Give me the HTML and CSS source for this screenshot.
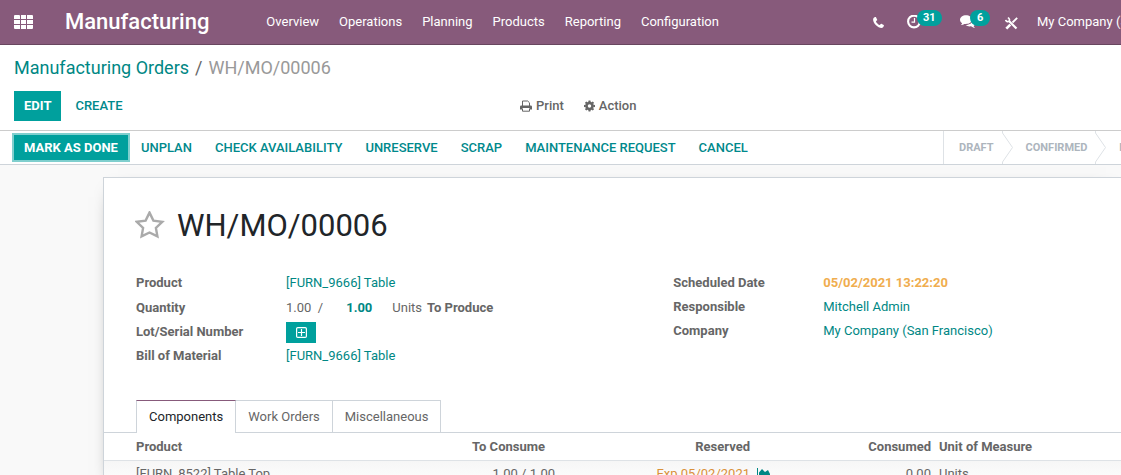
FILE: index.html
```html
<!DOCTYPE html>
<html lang="en">
<head>
<meta charset="utf-8">
<title>WH/MO/00006 - Manufacturing</title>
<link rel="stylesheet" href="styles.css">
</head>
<body>
<header class="navbar">
  <button class="apps" aria-label="Applications">
    <svg width="19" height="15" viewBox="0 0 19 15" fill="currentColor"><path d="M1 0h4q1 0 1 1v3H0V1q0-1 1-1zM7 0h5v4H7zM13 0h5q1 0 1 1v3h-6zM0 5h6v4H0zM7 5h5v4H7zM13 5h6v4h-6zM0 10h6v4H1q-1 0-1-1zM7 10h5v4H7zM13 10h6v3q0 1-1 1h-5z"/></svg>
  </button>
  <a class="brand" href="#">Manufacturing</a>
  <nav class="menu">
    <a href="#">Overview</a>
    <a href="#">Operations</a>
    <a href="#">Planning</a>
    <a href="#">Products</a>
    <a href="#">Reporting</a>
    <a href="#">Configuration</a>
  </nav>
  <div class="systray">
    <button class="tray phone" aria-label="Phone">
      <svg width="11" height="11" viewBox="0 0 11 11" fill="currentColor"><path d="M2.3.1C1.2.4.2 1.2.1 2.4c0 2 1.2 4.2 2.9 5.8 1.600 1.600 3.700 2.700 5.500 2.700 1.300-.1 2.100-1 2.400-2.200 0-.4 0-.6-.2-.7L8.400 6.800c-.4-.2-.6 0-.9.4-.4.500-.7.900-1.100.8C5 7.300 3.700 6 3 4.700c-.1-.5.300-.8.800-1.200.4-.3.500-.5.400-.8L3 .3C2.900 0 2.700 0 2.300.1z"/></svg>
    </button>
    <button class="tray clock" aria-label="Activities">
      <svg width="14" height="14" viewBox="0 0 14 14" fill="none" stroke="currentColor"><circle cx="7" cy="6.500" r="5.900" stroke-width="2.100"/><path d="M7.500 3v4.200H4.500" stroke-width="1.200"/></svg>
      <span class="badge">31</span>
    </button>
    <button class="tray chat" aria-label="Conversations">
      <svg width="16" height="14" viewBox="0 0 16 14" fill="currentColor"><path d="M6 .3C2.700.3 0 2.300 0 4.800c0 1.400.8 2.600 2.100 3.400-.2.700-.6 1.200-1.200 1.800 1.300 0 2.500-.5 3.300-1.100 4.400.6 7.800-1.400 7.800-4.100C12 2.300 9.300.3 6 .3z"/><path d="M13 4c.2 3.700-3 6.100-7.400 6.100 1.300 1 3.300 1.600 5.500 1.200 1 .9 2.300 1.500 3.900 1.600-.7-.6-1.200-1.300-1.400-2C16.600 9.300 16.300 5.400 13 4z"/></svg>
      <span class="badge">6</span>
    </button>
    <button class="tray tools" aria-label="Developer tools">
      <svg width="13" height="13" viewBox="0 0 13 13" fill="none" stroke="currentColor"><path d="M4 4l7.500 7.500" stroke-width="2.200"/><path d="M.7 2.800c.2 1.600 1.900 2.300 3.200 1.300C5 3 4.500 1.300 2.800.8" stroke-width="1.600"/><path d="M12.200.8L7.500 5.500" stroke-width="1.800"/><path d="M5.300 7.700L1.300 11.700" stroke-width="2.600"/></svg>
    </button>
    <button class="company">My Company (San Francisco)</button>
  </div>
</header>

<section class="control-panel">
  <nav class="breadcrumb"><a href="#">Manufacturing Orders</a><span class="slash">/</span><span class="current">WH/MO/00006</span></nav>
  <div class="cp-row">
    <div class="cp-buttons">
      <button class="btn primary">EDIT</button>
      <button class="btn">CREATE</button>
    </div>
    <div class="cp-actions">
      <button class="drop">
        <svg width="12" height="12" viewBox="0 0 12 12"><path d="M2.500 6V1h5.200l1.800 1.800V6" fill="none" stroke="currentColor"/><path d="M1.300 5.400h9.400q1.300 0 1.300 1.300V9.600H9.800V8.100H2.200v1.500H0V6.700q0-1.300 1.300-1.300z" fill="currentColor"/><path d="M2.500 8.500v2.700h7V8.500" fill="none" stroke="currentColor"/></svg>
        Print
      </button>
      <button class="drop">
        <svg width="11" height="12" viewBox="-6 -6 12 12"><g fill="currentColor"><path fill-rule="evenodd" d="M0-4.600A4.600 4.600 0 1 1 0 4.600 4.600 4.600 0 1 1 0-4.600zM0-1.900A1.900 1.900 0 1 0 0 1.900 1.900 1.900 0 1 0 0-1.900z"/><path id="tooth" d="M-1.400-4l.4-2H1l.4 2z"/><use href="#tooth" transform="rotate(45)"/><use href="#tooth" transform="rotate(90)"/><use href="#tooth" transform="rotate(135)"/><use href="#tooth" transform="rotate(180)"/><use href="#tooth" transform="rotate(225)"/><use href="#tooth" transform="rotate(270)"/><use href="#tooth" transform="rotate(315)"/></g></svg>
        Action
      </button>
    </div>
  </div>
</section>

<section class="statusbar">
  <div class="status-buttons">
    <button class="btn primary focused">MARK AS DONE</button>
    <button class="btn">UNPLAN</button>
    <button class="btn">CHECK AVAILABILITY</button>
    <button class="btn">UNRESERVE</button>
    <button class="btn">SCRAP</button>
    <button class="btn">MAINTENANCE REQUEST</button>
    <button class="btn">CANCEL</button>
  </div>
  <div class="steps">
    <span class="step">DRAFT</span>
    <svg class="chevron" width="12" height="33" viewBox="0 0 12 33" fill="none" stroke="#dee2e6"><path d="M.5 0v2L10.500 16.500.5 31v2"/></svg>
    <span class="step">CONFIRMED</span>
    <svg class="chevron" width="12" height="33" viewBox="0 0 12 33" fill="none" stroke="#dee2e6"><path d="M.5 0v2L10.500 16.500.5 31v2"/></svg>
    <span class="step last">PROGRESS</span>
  </div>
</section>

<main class="content">
  <article class="sheet">
    <div class="title">
      <button class="star" aria-label="Priority">
        <svg width="30" height="30" viewBox="0 0 30 30" fill="none" stroke="#aaa" stroke-width="2.400"><path d="M15 2.600l3.900 8 8.900 1.200-6.400 6.200 1.500 8.400L15 22.500l-7.900 3.900 1.500-8.400-6.400-6.200 8.900-1.200z" transform="translate(-.5 -1)"/></svg>
      </button>
      <h1>WH/MO/00006</h1>
    </div>
    <div class="groups">
      <dl class="group product-group">
        <dt>Product</dt><dd><a href="#">[FURN_9666] Table</a></dd>
        <dt>Quantity</dt><dd class="qty"><span>1.00&nbsp; /</span><b class="total">1.00</b><span>Units</span><b>To Produce</b></dd>
        <dt>Lot/Serial Number</dt><dd><button class="lot" aria-label="Generate lot number"><svg width="11" height="11" viewBox="0 0 11 11" fill="none" stroke="currentColor"><rect x=".6" y=".6" width="9.800" height="9.800" rx="1.200" stroke-width="1.200"/><path d="M5.500 2v7M2 5.500h7" stroke-width="1.200"/></svg></button></dd>
        <dt>Bill of Material</dt><dd><a href="#">[FURN_9666] Table</a></dd>
      </dl>
      <dl class="group">
        <dt>Scheduled Date</dt><dd class="late">05/02/2021 13:22:20</dd>
        <dt>Responsible</dt><dd><a href="#">Mitchell Admin</a></dd>
        <dt>Company</dt><dd><a href="#">My Company (San Francisco)</a></dd>
      </dl>
    </div>
    <div class="tabs" role="tablist">
      <button class="tab active" role="tab" aria-selected="true">Components</button>
      <button class="tab" role="tab">Work Orders</button>
      <button class="tab" role="tab">Miscellaneous</button>
    </div>
    <table class="lines">
      <colgroup><col class="c-product"><col class="c-consume"><col class="c-reserved"><col class="c-consumed"><col></colgroup>
      <thead>
        <tr><th>Product</th><th class="num consume">To Consume</th><th class="num reserved">Reserved</th><th class="num">Consumed</th><th>Unit of Measure</th></tr>
      </thead>
      <tbody>
        <tr>
          <td>[FURN_8522] Table Top</td>
          <td class="num">1.00 / 1.00</td>
          <td class="num"><span class="expected">Exp 05/02/2021</span><svg class="chart" width="14" height="12" viewBox="0 0 14 12"><path d="M.5 0v11.500H14" fill="none" stroke="#008784"/><path d="M2 10V4.500L5 1l3 3 3-2 2 4v4z" fill="#008784"/></svg></td>
          <td class="num">0.00</td>
          <td>Units</td>
        </tr>
      </tbody>
    </table>
  </article>
</main>
</body>
</html>
```
FILE: styles.css
```css
* { box-sizing: border-box; }

html, body { height: 100%; }

body {
  display: flex;
  flex-direction: column;
  margin: 0;
  overflow: hidden;
  font: 13px/20px Roboto, "Open Sans", sans-serif;
  color: #666;
  background: #fff;
}

a { color: #008784; text-decoration: none; }

button {
  padding: 0;
  border: 0;
  background: none;
  color: inherit;
  font: inherit;
  white-space: nowrap;
  cursor: pointer;
}

svg { display: block; flex: none; }

/* Navbar */
.navbar {
  display: flex;
  flex: none;
  align-items: center;
  height: 45px;
  padding-left: 14px;
  border-bottom: 1px solid #68465f;
  background: #875a7b;
  color: #fff;
}

.navbar a { color: #fff; }

.brand {
  margin-left: 32px;
  font-size: 22px;
  font-weight: 500;
}

.menu {
  display: flex;
  gap: 20px;
  margin-left: 57px;
}

.systray {
  display: flex;
  align-items: center;
  margin-left: auto;
}

.tray { position: relative; }
.clock { margin-left: 23px; }
.chat { margin-left: 39px; }
.tools { margin-left: 29px; padding-top: 3px; }

.badge {
  position: absolute;
  top: -5px;
  left: 10px;
  padding: 0 6px;
  border-radius: 8px;
  background: #00a09d;
  font-size: 11px;
  font-weight: 700;
  line-height: 16px;
}

.chat .badge { padding: 0 7px; }

.company {
  width: 84px;
  margin-left: 19px;
  overflow: hidden;
  text-align: left;
}

/* Control panel */
.control-panel {
  flex: none;
  padding: 9px 14px;
  border-bottom: 1px solid #ccc;
}

.breadcrumb {
  font-size: 18px;
  line-height: 28px;
}

.slash { margin: 0 6px; }
.current { color: #999; }

.cp-row {
  display: grid;
  grid-template-columns: 506px 1fr;
  align-items: center;
  margin-top: 9px;
}

.cp-buttons, .cp-actions { display: flex; }
.cp-buttons { gap: 4px; }
.cp-actions { gap: 20px; }

.btn {
  height: 30px;
  padding: 0 10px;
  color: #00898c;
  font-weight: 500;
}

.btn.primary {
  background: #00a09d;
  color: #fff;
  font-weight: 700;
}

.btn.focused { box-shadow: 0 0 0 2px #80cfce; }

.drop {
  display: flex;
  align-items: center;
  gap: 4px;
  font-weight: 500;
}

/* Status bar */
.statusbar {
  display: flex;
  flex: none;
  align-items: center;
  justify-content: space-between;
  padding-left: 14px;
  border-bottom: 1px solid #ced4da;
}

.status-buttons { display: flex; gap: 3px; }
.status-buttons .btn { height: 25px; }

.steps {
  display: flex;
  align-items: center;
  width: 178px;
  overflow: hidden;
  border-left: 1px solid #dee2e6;
  color: #adb5bd;
  font-size: 11px;
  font-weight: 700;
}

.step { padding: 0 8px 0 15px; }
.step + .chevron + .step { padding-left: 12px; }

/* Sheet */
.content {
  flex: 1;
  min-height: 0;
  padding: 12px 0 0 103px;
  overflow: hidden;
  background: #f9f9f9;
}

.sheet {
  min-height: 100%;
  border: 1px solid #ced4da;
  border-right: 0;
  background: #fff;
  box-shadow: 0 5px 20px -15px #000;
}

.title {
  display: flex;
  align-items: center;
  gap: 12px;
  padding: 28px 31px 0;
}

h1 {
  margin: 0;
  color: #212529;
  font-size: 31px;
  font-weight: 400;
  line-height: 40px;
}

.groups {
  display: grid;
  grid-template-columns: 6fr 5fr;
  padding: 25px 0 0 32px;
}

.group {
  display: grid;
  grid-template-columns: 150px 1fr;
  grid-auto-rows: 24px;
  align-items: center;
  align-content: start;
  margin: 0;
}

.product-group { grid-template-rows: 24px 25px; }

dt, b, th { font-weight: 700; }
dd { margin: 0; }

.qty { display: flex; gap: 5px; }
.qty .total { margin: 0 15px 0 18px; color: #008784; }

.late { color: #f0ad4e; font-weight: 700; }

.lot {
  display: flex;
  align-items: center;
  justify-content: center;
  width: 30px;
  height: 21px;
  background: #00a09d;
  color: #fff;
}

/* Tabs */
.tabs {
  display: flex;
  margin-top: 32px;
  padding-left: 32px;
  border-bottom: 1px solid #ced4da;
}

.tab {
  height: 32px;
  padding: 0 12px;
  border: solid #ced4da;
  border-width: 1px 1px 0 0;
}

.tab.active {
  height: 33px;
  margin-bottom: -1px;
  border-left-width: 1px;
  border-top-color: #875a7b;
  background: #fff;
  color: #212529;
}

/* Lines */
.lines {
  width: 100%;
  border-collapse: collapse;
  table-layout: fixed;
}

.c-product { width: 352px; }
.c-consume { width: 103px; }
.c-reserved { width: 216px; }
.c-consumed { width: 160px; }

.lines th, .lines td {
  padding: 3px 4px;
  text-align: left;
  white-space: nowrap;
}

.lines th { padding: 4px 4px 3px; }
.lines th:first-child, .lines td:first-child { padding-left: 32px; }
.lines .num { text-align: right; }
.lines th.consume { padding-right: 14px; }
.lines th.reserved { padding-right: 25px; }
.lines thead { border-bottom: 1px solid #dee2e6; }
.lines tbody { background: linear-gradient(#f6f6f6, #fff); }

.expected { color: #d9913a; }
.chart { display: inline-block; margin-left: 7px; vertical-align: -2px; }
```
